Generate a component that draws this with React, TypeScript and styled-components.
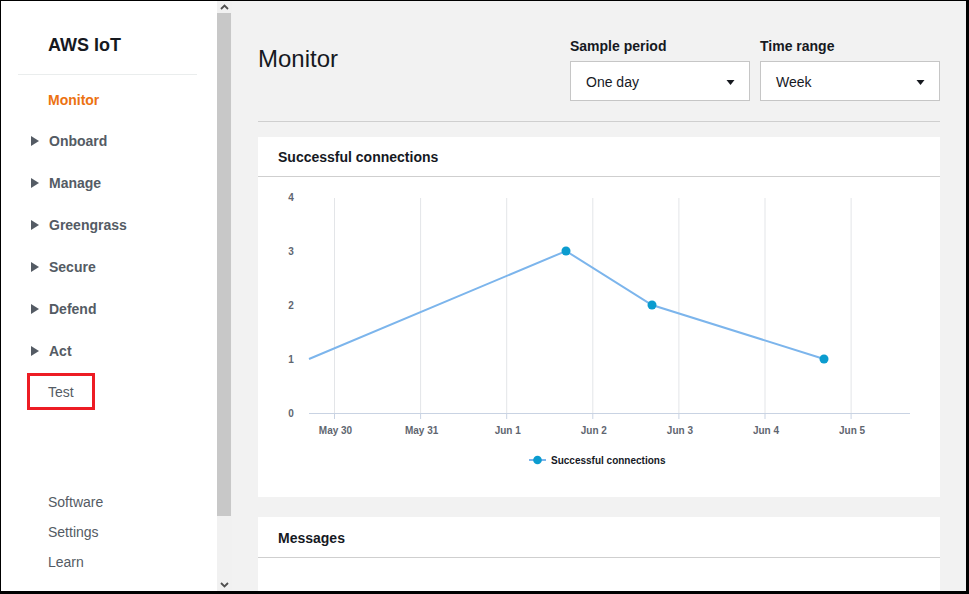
import React from 'react';
import styled, { createGlobalStyle } from 'styled-components';

const GlobalStyle = createGlobalStyle`
  html, body {
    margin: 0;
    padding: 0;
    background: #ffffff;
  }
  body {
    font-family: "Liberation Sans", Arial, sans-serif;
  }
`;

const navItems = ['Onboard', 'Manage', 'Greengrass', 'Secure', 'Defend', 'Act'];
const footerItems = ['Software', 'Settings', 'Learn'];

const xLabels = ['May 30', 'May 31', 'Jun 1', 'Jun 2', 'Jun 3', 'Jun 4', 'Jun 5'];
const yLabels = [4, 3, 2, 1, 0];

// chart drawn in page coordinates (viewBox offset by the card origin)
const gridX = (i: number) => 334.5 + i * 86.1;
const yFor = (v: number) => 413 - v * 54;
const points: [number, number][] = [
  [309, yFor(1)],
  [566, yFor(3)],
  [652, yFor(2)],
  [824, yFor(1)],
];

export default function App() {
  return (
    <>
      <GlobalStyle />
      <Frame>
        <Sidebar>
          <SideNav>
            <Brand>AWS IoT</Brand>
            <NavList>
              <NavItem $active $height={41}>Monitor</NavItem>
              {navItems.map((label) => (
                <NavItem key={label} $expandable>
                  <Caret viewBox="0 0 8 10">
                    <path d="M0 0 L8 5 L0 10 Z" />
                  </Caret>
                  {label}
                </NavItem>
              ))}
              <NavSlot>
                <Highlight>Test</Highlight>
              </NavSlot>
            </NavList>
            <Footer>
              {footerItems.map((label) => (
                <FooterItem key={label}>{label}</FooterItem>
              ))}
            </Footer>
          </SideNav>
          <Scrollbar>
            <ScrollArrow>
              <svg width="9" height="6" viewBox="0 0 9 6">
                <path d="M1 5 L4.5 1.5 L8 5" fill="none" stroke="#505050" strokeWidth="1.8" />
              </svg>
            </ScrollArrow>
            <Thumb />
            <ScrollSpacer />
            <ScrollArrow>
              <svg width="9" height="6" viewBox="0 0 9 6">
                <path d="M1 1 L4.5 4.5 L8 1" fill="none" stroke="#505050" strokeWidth="1.8" />
              </svg>
            </ScrollArrow>
          </Scrollbar>
        </Sidebar>

        <Main>
          <Header>
            <PageTitle>Monitor</PageTitle>
            <Controls>
              <Field>
                <FieldLabel>Sample period</FieldLabel>
                <Select>
                  One day
                  <SelectCaret viewBox="0 0 8 5">
                    <path d="M0 0 L8 0 L4 5 Z" />
                  </SelectCaret>
                </Select>
              </Field>
              <Field>
                <FieldLabel>Time range</FieldLabel>
                <Select>
                  Week
                  <SelectCaret viewBox="0 0 8 5">
                    <path d="M0 0 L8 0 L4 5 Z" />
                  </SelectCaret>
                </Select>
              </Field>
            </Controls>
          </Header>

          <Card>
            <CardHeader>Successful connections</CardHeader>
            <ChartBody>
              <svg width="682" height="320" viewBox="258 177 682 320">
                {xLabels.map((_, i) => (
                  <line key={`g${i}`} x1={gridX(i)} x2={gridX(i)} y1={198} y2={413} stroke="#e3e5e8" strokeWidth="1" />
                ))}
                <line x1={309} x2={910} y1={413.5} y2={413.5} stroke="#c9d3e3" strokeWidth="1" />
                {xLabels.map((label, i) => (
                  <g key={label}>
                    <line x1={gridX(i)} x2={gridX(i)} y1={413} y2={419} stroke="#c9d3e3" strokeWidth="1" />
                    <AxisText x={gridX(i) + 1} y={434} textAnchor="middle">{label}</AxisText>
                  </g>
                ))}
                {yLabels.map((v) => (
                  <AxisText key={v} x={291} y={yFor(v) + 3.5} textAnchor="middle">{v}</AxisText>
                ))}
                <polyline
                  points={points.map((p) => p.join(',')).join(' ')}
                  fill="none"
                  stroke="#7cb5ec"
                  strokeWidth="2"
                />
                {points.slice(1).map(([x, y]) => (
                  <circle key={x} cx={x} cy={y} r={4.5} fill="#0b9ccf" />
                ))}
                <line x1={529} x2={546} y1={460} y2={460} stroke="#7cb5ec" strokeWidth="2" />
                <circle cx={537.5} cy={460} r={4.3} fill="#0b9ccf" />
                <LegendText x={551} y={463.5}>Successful connections</LegendText>
              </svg>
            </ChartBody>
          </Card>

          <Card $last>
            <CardHeader $height={41}>Messages</CardHeader>
          </Card>
        </Main>
      </Frame>
    </>
  );
}

const Frame = styled.div`
  box-sizing: border-box;
  width: 969px;
  height: 594px;
  display: flex;
  overflow: hidden;
  border-style: solid;
  border-color: #000000;
  border-width: 1px 3px 3px 1px;
  background: #f2f2f2;
`;

const Sidebar = styled.aside`
  display: flex;
  flex-shrink: 0;
  height: 100%;
`;

const SideNav = styled.nav`
  width: 216px;
  background: #ffffff;
  display: flex;
  flex-direction: column;
  padding-bottom: 14px;
  box-sizing: border-box;
`;

const Brand = styled.div`
  margin: 0 20px 0 17px;
  padding: 32px 0 17px 30px;
  line-height: 24px;
  font-size: 18px;
  font-weight: 700;
  color: #16191f;
  border-bottom: 1px solid #eaeded;
`;

const NavList = styled.ul`
  list-style: none;
  margin: 0;
  padding: 4px 0 0 0;
`;

const NavItem = styled.li<{ $active?: boolean; $expandable?: boolean; $height?: number }>`
  height: ${(p) => p.$height ?? 42}px;
  display: flex;
  align-items: center;
  padding-left: ${(p) => (p.$expandable ? '30px' : '47px')};
  font-size: 14px;
  font-weight: 700;
  color: ${(p) => (p.$active ? '#ec7211' : '#545b64')};
`;

const Caret = styled.svg`
  width: 8px;
  height: 10px;
  fill: #545b64;
  margin-right: 10px;
`;

const NavSlot = styled.li`
  height: 40px;
  display: flex;
  align-items: flex-start;
  padding: 1px 0 0 26px;
  box-sizing: border-box;
`;

const Highlight = styled.div`
  box-sizing: border-box;
  width: 68px;
  height: 37px;
  border: 3px solid #ed1c24;
  padding-left: 18px;
  display: flex;
  align-items: center;
  font-size: 14px;
  color: #545b64;
`;

const Footer = styled.div`
  margin-top: auto;
  display: flex;
  flex-direction: column;
`;

const FooterItem = styled.div`
  height: 30px;
  line-height: 30px;
  padding-left: 47px;
  font-size: 14px;
  color: #545b64;
`;

const Scrollbar = styled.div`
  width: 15px;
  background: #f1f1f1;
  display: flex;
  flex-direction: column;
`;

const ScrollArrow = styled.div`
  height: 12px;
  display: flex;
  align-items: center;
  justify-content: center;
  flex-shrink: 0;
`;

const Thumb = styled.div`
  height: 503px;
  width: 14px;
  background: #c8c8c8;
`;

const ScrollSpacer = styled.div`
  flex: 1;
`;

const Main = styled.main`
  flex: 1;
  padding: 37px 26px 0 26px;
  display: flex;
  flex-direction: column;
  min-width: 0;
`;

const Header = styled.header`
  display: flex;
  justify-content: space-between;
  align-items: flex-start;
  padding-bottom: 20px;
  border-bottom: 1px solid #cfcfcf;
  margin-bottom: 15px;
`;

const PageTitle = styled.h1`
  margin: 6px 0 0 0;
  font-size: 24px;
  font-weight: 400;
  line-height: 30px;
  color: #16191f;
`;

const Controls = styled.div`
  display: flex;
  gap: 10px;
`;

const Field = styled.div`
  display: flex;
  flex-direction: column;
`;

const FieldLabel = styled.label`
  font-size: 14px;
  font-weight: 700;
  line-height: 16px;
  color: #16191f;
  margin-bottom: 7px;
`;

const Select = styled.div`
  box-sizing: border-box;
  width: 180px;
  height: 40px;
  background: #ffffff;
  border: 1px solid #c6c6c6;
  display: flex;
  align-items: center;
  justify-content: space-between;
  padding: 2px 14px 0 15px;
  font-size: 14px;
  color: #16191f;
`;

const SelectCaret = styled.svg`
  width: 9px;
  height: 5px;
  fill: #16191f;
`;

const Card = styled.section<{ $last?: boolean }>`
  background: #ffffff;
  margin-bottom: ${(p) => (p.$last ? '0' : '20px')};
  flex-shrink: 0;
  ${(p) => (p.$last ? 'flex: 1;' : '')}
`;

const CardHeader = styled.h2<{ $height?: number }>`
  margin: 0;
  height: ${(p) => p.$height ?? 40}px;
  box-sizing: border-box;
  display: flex;
  align-items: center;
  padding: 1px 0 0 20px;
  font-size: 14px;
  font-weight: 700;
  color: #16191f;
  border-bottom: 1px solid #cfcfcf;
`;

const ChartBody = styled.div`
  height: 320px;
  svg {
    display: block;
  }
`;

const AxisText = styled.text`
  font-family: "Liberation Sans", Arial, sans-serif;
  font-size: 10px;
  font-weight: 700;
  fill: #5f6670;
`;

const LegendText = styled.text`
  font-family: "Liberation Sans", Arial, sans-serif;
  font-size: 10px;
  font-weight: 700;
  fill: #16191f;
`;
